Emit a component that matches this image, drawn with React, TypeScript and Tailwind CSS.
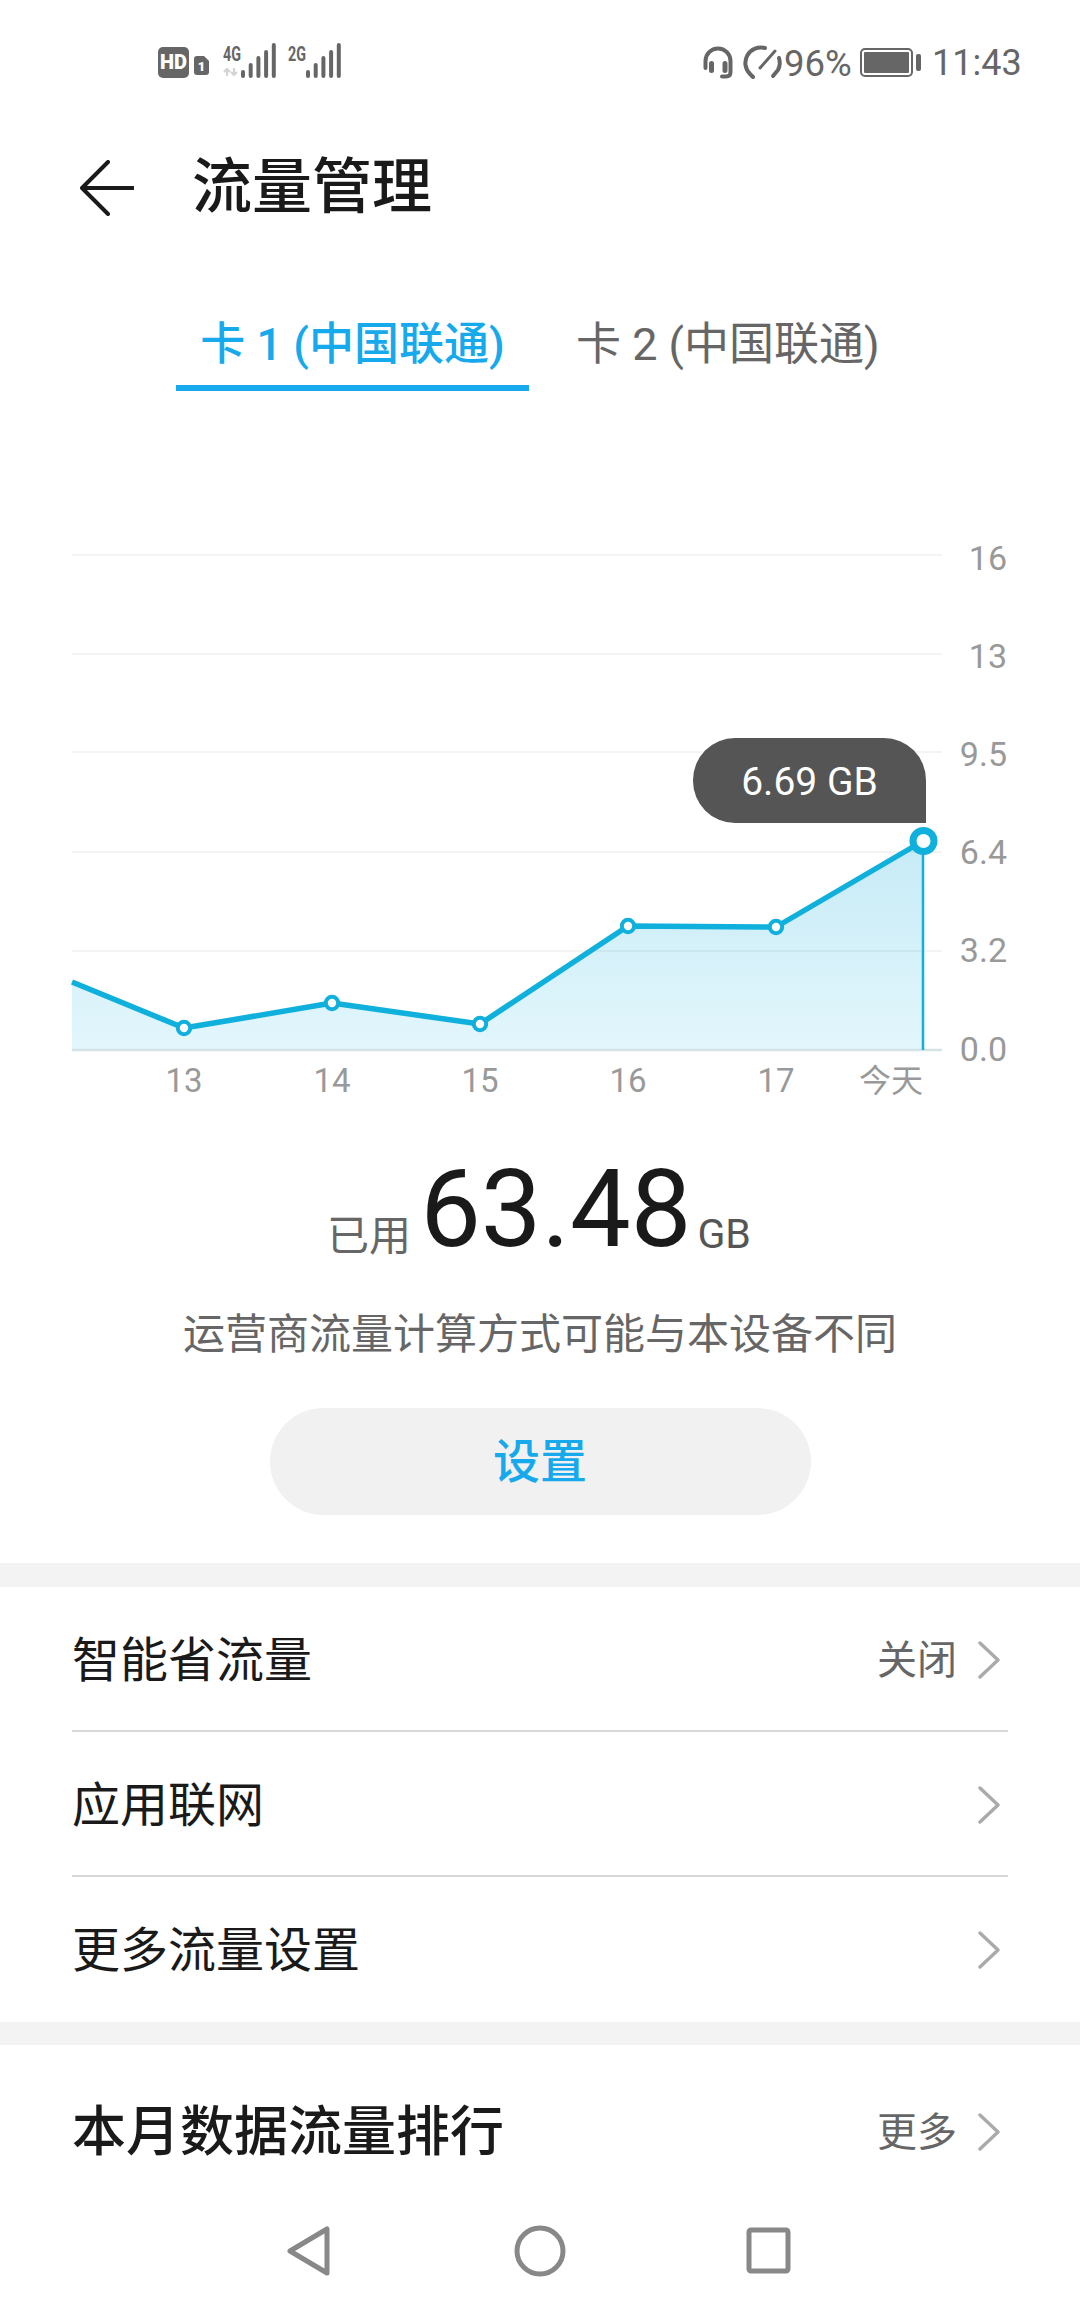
const sans = "font-['Roboto','Noto_Sans_CJK_SC',sans-serif]";

const gridRows = [
  { y: 555, labelY: 570, label: "16" },
  { y: 654, labelY: 667.5, label: "13" },
  { y: 752, labelY: 765.5, label: "9.5" },
  { y: 852, labelY: 864, label: "6.4" },
  { y: 951, labelY: 961.5, label: "3.2" },
  { y: 1050, labelY: 1060.5, label: "0.0" },
];

const points: [number, number][] = [
  [184, 1028],
  [332, 1003],
  [480, 1024],
  [628, 926],
  [776, 927],
];

const days = [
  { x: 184, label: "13" },
  { x: 332, label: "14" },
  { x: 480, label: "15" },
  { x: 628, label: "16" },
  { x: 776, label: "17" },
];

function SignalBars({ x }: { x: number }) {
  const tops = [72, 65, 58, 52, 45];
  return (
    <g stroke="#666" strokeWidth="4" strokeLinecap="round">
      {tops.map((top, i) => (
        <line key={i} x1={x + i * 7.7} y1={top} x2={x + i * 7.7} y2={76} />
      ))}
    </g>
  );
}

function StatusBar() {
  return (
    <div className="h-[84px] shrink-0 flex justify-between">
      <svg width="360" height="84" viewBox="0 0 360 84" className="block">
        <rect x="158" y="47" width="31" height="31" rx="5" fill="#666" />
        <text x="173.5" y="69" textAnchor="middle" fontFamily="Roboto" fontWeight="900" fontSize="20" fill="#fff">HD</text>
        <path d="M197 56h7l5 5v11a3 3 0 0 1-3 3h-9a3 3 0 0 1-3-3V59a3 3 0 0 1 3-3z" fill="#666" />
        <text x="201.5" y="71" textAnchor="middle" fontFamily="Roboto" fontWeight="900" fontSize="13" fill="#fff">1</text>
        <text x="223" y="61" fontFamily="Roboto" fontWeight="700" fontSize="20" textLength="18" lengthAdjust="spacingAndGlyphs" fill="#666">4G</text>
        <path d="M227 76v-7m-3 3l3-3 3 3M234 68v7m-3-3l3 3 3-3" stroke="#d4d4d4" strokeWidth="2.2" fill="none" />
        <SignalBars x={243} />
        <text x="288" y="61" fontFamily="Roboto" fontWeight="700" fontSize="20" textLength="18" lengthAdjust="spacingAndGlyphs" fill="#666">2G</text>
        <SignalBars x={308} />
      </svg>
      <div className="flex items-start">
        <svg width="240" height="84" viewBox="700 0 240 84" className="block shrink-0">
          <g fill="none" stroke="#666" strokeWidth="4" strokeLinecap="round">
            <path d="M705.5 68v-7a12.5 12.5 0 0 1 25 0v11q0 4.5-4.5 4.5h-4" />
            <path d="M711.5 63.5v7M725 63.5v7" strokeWidth="5" />
            <path d="M753 77l-3-3a15.5 15.5 0 0 1 15-26" />
            <path d="M779 58a16 16 0 0 1-1 12l-5 6" />
            <path d="M760 68l15-17" strokeWidth="3" />
          </g>
          <text x="784" y="76" fontFamily="Roboto" fontSize="36.5" fill="#666">96%</text>
          <rect x="861" y="49" width="51" height="27" rx="4" fill="none" stroke="#666" strokeWidth="2" />
          <rect x="864" y="52" width="45" height="21" rx="1" fill="#666" />
          <rect x="916" y="54" width="5" height="17" rx="2" fill="#666" />
        </svg>
        <span className="ml-[-8px] mr-[63px] w-[85px] mt-[45px] text-[36px] leading-none text-[#666] whitespace-nowrap">11:43</span>
      </div>
    </div>
  );
}

function Header() {
  return (
    <div className="h-[208px] shrink-0 flex items-center">
      <svg width="54" height="56" viewBox="0 0 54 56" className="ml-[80px] block">
        <path d="M28 2L2 28l26 26M2 28h51" fill="none" stroke="#1a1a1a" strokeWidth="4" strokeLinecap="round" strokeLinejoin="round" />
      </svg>
      <h1 className="ml-[58px] text-[60px] leading-none font-medium text-[#1a1a1a]">流量管理</h1>
    </div>
  );
}

function Tabs() {
  return (
    <div className="h-[99px] shrink-0 flex pl-[176px] gap-[47px]">
      <div className="w-[353px] h-[99px] flex flex-col items-center border-b-[6px] border-[#16a9ec]">
        <span className="mt-[27px] text-[45px] leading-[52px] font-medium text-[#16a9ec] whitespace-nowrap">卡 1 (中国联通)</span>
      </div>
      <div className="h-[99px]">
        <span className="block mt-[27px] text-[45px] leading-[52px] text-[#666] whitespace-nowrap">卡 2 (中国联通)</span>
      </div>
    </div>
  );
}

function UsageChart() {
  const line = "72,982 " + points.map((p) => p.join(",")).join(" ") + " 923,841";
  return (
    <div className="relative mt-[109px] h-[611px] shrink-0">
      <svg width="1080" height="611" viewBox="0 500 1080 611" className="block">
        <defs>
          <linearGradient id="area" x1="0" y1="0" x2="0" y2="1">
            <stop offset="0" stopColor="#c6ebf7" />
            <stop offset="1" stopColor="#e3f6fc" />
          </linearGradient>
        </defs>
        <polygon points={`72,1050 ${line} 923,1050`} fill="url(#area)" />
        {gridRows.map((row) => (
          <g key={row.label}>
            <line x1="72" x2="942" y1={row.y} y2={row.y} stroke={row.y === 1050 ? "#d3e3e7" : "#000"} strokeOpacity={row.y === 1050 ? 1 : 0.06} strokeWidth={row.y === 1050 ? 2.5 : 1.5} />
            <text x="1007" y={row.labelY} textAnchor="end" fontFamily="Roboto" fontSize="34" fill="#999">{row.label}</text>
          </g>
        ))}
        <line x1="923" x2="923" y1="841" y2="1050" stroke="#0fb0dc" strokeWidth="2.5" />
        <polyline points={line} fill="none" stroke="#0fb0dc" strokeWidth="5.5" strokeLinejoin="round" />
        {points.map(([x, y]) => (
          <circle key={x} cx={x} cy={y} r="6.2" fill="#fff" stroke="#0fb0dc" strokeWidth="4" />
        ))}
        <circle cx="923.5" cy="841" r="10.5" fill="#fff" stroke="#0fb0dc" strokeWidth="7" />
        {days.map((d) => (
          <text key={d.x} x={d.x} y="1092" textAnchor="middle" fontFamily="Roboto" fontSize="33" fill="#999">{d.label}</text>
        ))}
        <text x="891" y="1092" textAnchor="middle" fontFamily="Noto Sans CJK SC" fontSize="32" fill="#999">今天</text>
      </svg>
      <div className="absolute left-[693px] top-[238px] w-[233px] h-[85px] pt-[4px] rounded-l-[42px] rounded-tr-[42px] bg-[#555] flex items-center justify-center text-[39px] text-white">
        6.69 GB
      </div>
    </div>
  );
}

function Usage() {
  return (
    <div className="h-[452px] shrink-0 flex flex-col items-center">
      <div className="h-[157px] flex items-end gap-[9px] pr-[2px]">
        <span className="text-[42px] leading-[44px] mb-[9px] text-[#666]">已用</span>
        <span className="text-[108px] leading-[108px] mb-[5px] text-[#1a1a1a]">63.48</span>
        <span className="text-[41px] leading-[44px] mb-[12px] ml-[-3px] text-[#555]">GB</span>
      </div>
      <p className="mt-[42px] text-[42px] leading-[50px] text-[#666]">运营商流量计算方式可能与本设备不同</p>
      <button className="mt-[48px] w-[541px] h-[107px] pt-[2px] rounded-full bg-[#f1f1f1] text-[47px] font-medium text-[#16a9ec]">设置</button>
    </div>
  );
}

function Chevron() {
  return (
    <svg width="22" height="38" viewBox="0 0 22 38" className="block shrink-0 mb-[3px]">
      <path d="M2 2l18 17L2 36" fill="none" stroke="#aaa" strokeWidth="3.4" strokeLinecap="round" strokeLinejoin="round" />
    </svg>
  );
}

function Row({ label, value, last }: { label: string; value?: string; last?: boolean }) {
  return (
    <div className={`h-[145px] mx-[72px] pt-[5px] flex items-center justify-between border-b-[2px] ${last ? "border-transparent" : "border-[#d8d8d8]"}`}>
      <span className="text-[48px] leading-none text-[#1a1a1a]">{label}</span>
      <span className="flex items-center gap-[21px] pr-[8px]">
        {value && <span className="text-[40px] leading-none text-[#666]">{value}</span>}
        <Chevron />
      </span>
    </div>
  );
}

function NavBar() {
  return (
    <div className="h-[130px] shrink-0 flex justify-center">
      <svg width="1080" height="130" viewBox="0 2180 1080 130" className="block">
        <g fill="none" stroke="#888" strokeWidth="5" strokeLinejoin="round">
          <path d="M327 2229v44l-37-22z" />
          <circle cx="540" cy="2251" r="23" />
          <rect x="749" y="2230" width="39" height="41" rx="2" />
        </g>
      </svg>
    </div>
  );
}

export default function App() {
  return (
    <div className={`w-[1080px] h-[2310px] overflow-hidden bg-white flex flex-col ${sans}`}>
      <StatusBar />
      <Header />
      <Tabs />
      <UsageChart />
      <Usage />
      <main className="flex-1 overflow-hidden">
        <div className="h-[24px] bg-[#f3f3f3]" />
        <Row label="智能省流量" value="关闭" />
        <Row label="应用联网" />
        <Row label="更多流量设置" last />
        <div className="h-[23px] bg-[#f3f3f3]" />
        <div className="h-[176px] mx-[72px] flex items-center justify-between">
          <h2 className="text-[54px] leading-none font-medium text-[#1a1a1a]">本月数据流量排行</h2>
          <span className="flex items-center gap-[21px] pr-[8px]">
            <span className="text-[40px] leading-none text-[#666]">更多</span>
            <Chevron />
          </span>
        </div>
      </main>
      <NavBar />
    </div>
  );
}
